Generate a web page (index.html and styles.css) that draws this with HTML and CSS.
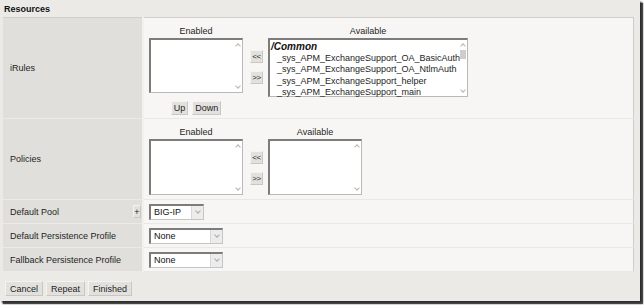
FILE: index.html
```html
<!DOCTYPE html>
<html lang="en">
<head>
  <meta charset="UTF-8" />
  <title>Resources</title>
  <link rel="stylesheet" href="styles.css">
</head>
<body>
  <div class="frame">
    <div class="title">Resources</div>
    <table class="res">
      <tr class="row-irules">
        <th>iRules</th>
        <td>
          <div class="picker">
            <div class="col">
              <div class="cap">Enabled</div>
              <div class="list enabled">
                <div class="sb"><span class="up"></span><span class="dn"></span></div>
              </div>
              <div class="order">
                <button class="btn">Up</button>
                <button class="btn">Down</button>
              </div>
            </div>
            <div class="moves">
              <button class="btn mv">&lt;&lt;</button>
              <button class="btn mv">&gt;&gt;</button>
            </div>
            <div class="col">
              <div class="cap">Available</div>
              <div class="list avail wide">
                <div class="items">
                  <div class="grp">/Common</div>
                  <div class="it">_sys_APM_ExchangeSupport_OA_BasicAuth</div>
                  <div class="it">_sys_APM_ExchangeSupport_OA_NtlmAuth</div>
                  <div class="it">_sys_APM_ExchangeSupport_helper</div>
                  <div class="it">_sys_APM_ExchangeSupport_main</div>
                </div>
                <div class="sb"><span class="up"></span><span class="thumb"></span><span class="dn"></span></div>
              </div>
            </div>
          </div>
        </td>
      </tr>
      <tr class="row-policies">
        <th>Policies</th>
        <td>
          <div class="picker">
            <div class="col">
              <div class="cap">Enabled</div>
              <div class="list enabled tall">
                <div class="sb"><span class="up"></span><span class="dn"></span></div>
              </div>
            </div>
            <div class="moves">
              <button class="btn mv">&lt;&lt;</button>
              <button class="btn mv">&gt;&gt;</button>
            </div>
            <div class="col">
              <div class="cap">Available</div>
              <div class="list enabled tall">
                <div class="sb"><span class="up"></span><span class="dn"></span></div>
              </div>
            </div>
          </div>
        </td>
      </tr>
      <tr class="row-small">
        <th><div class="pool">Default Pool<button class="btn plus">+</button></div></th>
        <td><div class="sel short"><span class="val">BIG-IP</span><span class="arr"></span></div></td>
      </tr>
      <tr class="row-small">
        <th>Default Persistence Profile</th>
        <td><div class="sel"><span class="val">None</span><span class="arr"></span></div></td>
      </tr>
      <tr class="row-small">
        <th>Fallback Persistence Profile</th>
        <td><div class="sel"><span class="val">None</span><span class="arr"></span></div></td>
      </tr>
    </table>
    <div class="actions">
      <button class="btn">Cancel</button>
      <button class="btn">Repeat</button>
      <button class="btn">Finished</button>
    </div>
  </div>
</body>
</html>
```

FILE: styles.css
```css
* { margin: 0; padding: 0; box-sizing: border-box; }
html, body { width: 644px; height: 305px; background: #fff; overflow: hidden; }
body {
  font-family: "Liberation Sans", Arial, sans-serif;
  font-size: 9px;
  color: #222;
}

.frame {
  width: 640px;
  height: 301px;
  background: #ebeae6;
  box-shadow: 2px 2px 2px #2a2a2a, 3px 3px 1px #555;
  padding: 4px 0 0 3px;
}

.title {
  font-weight: bold;
  font-size: 9px;
  line-height: 10px;
  height: 13px;
  padding-left: 1px;
  color: #111;
}

.res {
  border-collapse: collapse;
  width: 631px;
  border-top: 1px solid #cfceca;
  border-right: 1px solid #cdccc8;
  border-bottom: 1px solid #cdccc8;
}

.res th {
  width: 140px;
  background: #e0dfdb;
  text-align: left;
  font-weight: normal;
  padding: 0 0 0 7px;
  border-right: 2px solid #f2f1ee;
  border-bottom: 1px solid #eceae7;
  vertical-align: middle;
  color: #1e1e1e;
}

.res td {
  background: #f7f6f4;
  border-bottom: 1px solid #e9e8e4;
  padding: 0 0 0 5px;
  vertical-align: top;
}

.row-irules th, .row-irules td { height: 101px; }
.row-policies th, .row-policies td { height: 81px; }
.row-small th, .row-small td { height: 24px; }
.row-small td { vertical-align: middle; }

.picker { display: flex; align-items: flex-start; padding-top: 6px; }

.col { display: flex; flex-direction: column; align-items: center; }
.cap { line-height: 14px; height: 14px; color: #1e1e1e; }

.list {
  position: relative;
  width: 94px;
  height: 55px;
  background: #fff;
  border: 1px solid #b9b9b9;
  border-top: 2px solid #7c7c7c;
  border-left: 2px solid #7c7c7c;
}
.list.tall { height: 56px; }
.list.wide { width: 200px; height: 59px; }

.sb {
  position: absolute;
  right: 0;
  top: 0;
  bottom: 0;
  width: 8px;
  display: flex;
  flex-direction: column;
  align-items: center;
}
.sb .up, .sb .dn {
  width: 4px;
  height: 4px;
  border-left: 1px solid #b4b4b4;
  border-top: 1px solid #b4b4b4;
  margin-top: 4px;
}
.sb .up { transform: rotate(45deg); }
.sb .dn { transform: rotate(225deg); margin-top: auto; margin-bottom: 4px; }
.sb .thumb {
  width: 6px;
  height: 9px;
  background: #cdcdcd;
  margin-top: 2px;
}

.items { padding: 1px 0 0 1px; line-height: 11.5px; }
.grp { font-weight: bold; font-style: italic; font-size: 10px; color: #111; }
.it { padding-left: 6px; color: #1e1e1e; white-space: nowrap; }

.moves {
  display: flex;
  flex-direction: column;
  gap: 8px;
  margin: 26px 5px 0 7px;
}

.btn {
  font-family: "Liberation Sans", Arial, sans-serif;
  font-size: 9px;
  color: #1e1e1e;
  background: #e2e1dd;
  border: 1px solid #f4f3f0;
  border-right-color: #c8c7c3;
  border-bottom-color: #c8c7c3;
  height: 14px;
  line-height: 12px;
  padding: 0 2px;
}
.mv { width: 13px; padding: 0; height: 13px; font-size: 8px; letter-spacing: -0.5px; }

.order { display: flex; gap: 4px; margin-top: 8px; }

.pool {
  display: flex;
  align-items: center;
  justify-content: space-between;
  padding-right: 1px;
}
.plus { width: 8px; padding: 0; height: 13px; font-size: 9px; }

.sel {
  display: flex;
  width: 74px;
  height: 16px;
  background: #fff;
  border: 1px solid #c4c4c4;
  border-top: 2px solid #7c7c7c;
  border-left: 2px solid #7c7c7c;
}
.sel.short { width: 55px; }
.sel .val { flex: 1; padding-left: 3px; line-height: 13px; color: #111; }
.sel .arr {
  width: 12px;
  background: #ececec;
  border-left: 1px solid #d8d8d8;
  position: relative;
}
.sel .arr::after {
  content: "";
  position: absolute;
  left: 4px;
  top: 3px;
  width: 3px;
  height: 3px;
  border-right: 1px solid #aaa;
  border-bottom: 1px solid #aaa;
  transform: rotate(45deg);
}

.actions { display: flex; gap: 3px; padding: 9px 0 0 2px; }
.actions .btn { height: 15px; padding: 0 4px; }
```
